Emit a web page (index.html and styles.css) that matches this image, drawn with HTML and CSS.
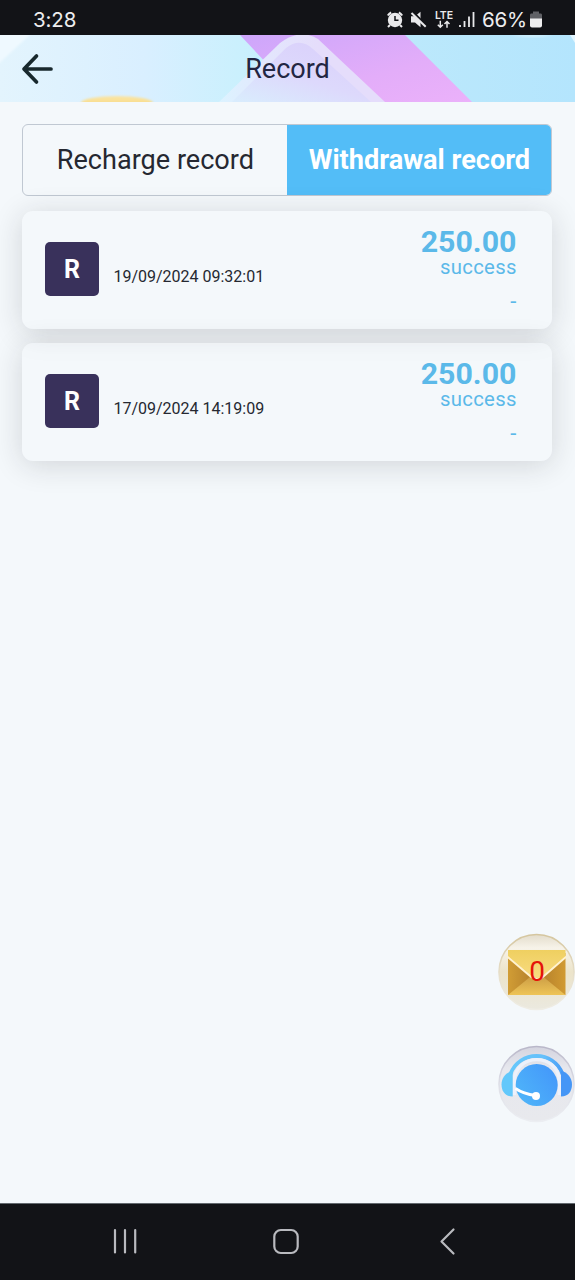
FILE: index.html
```html
<!DOCTYPE html>
<html lang="en">
<head>
<meta charset="utf-8">
<title>Record</title>
<link rel="stylesheet" href="styles.css">
</head>
<body>
<div class="phone">
  <div class="status">
    <span class="clock">3:28</span>
    <svg class="status-icons" width="94" height="35" viewBox="0 0 94 35" fill="none" stroke="#e9e9eb">
      <circle cx="14" cy="20" r="7.200" fill="#e9e9eb" stroke="none"/>
      <path d="M9 25l-2 2M19 25l2 2M6.800 15.500a9 9 0 0 1 3.400-3M21.200 15.500a9 9 0 0 0-3.400-3" stroke-width="2"/>
      <path d="M14 16v4.300h3.500" stroke="#121317" stroke-width="1.500"/>
      <path d="M30 16.300h4l5.500-4.600v15.600l-5.500-4.800h-4z" fill="#e9e9eb" stroke="none"/>
      <path d="M31.500 11.500l14 14.500" stroke="#121317" stroke-width="2.500"/>
      <path d="M30.500 13l14.200 13.700" stroke-width="2"/>
      <text class="lte" x="54" y="18.500" textLength="18">LTE</text>
      <path d="M59.300 20.800v6.200M56.800 24.700l2.500 2.500 2.500-2.500M66 27.700v-6.200M63.500 24l2.500-2.500 2.500 2.500" stroke-width="1.500"/>
      <path d="M79 25v2M83.500 21v6M88 16.500v10.500M92.500 12v15" stroke-width="1.800"/>
    </svg>
    <span class="percent">66%</span>
    <svg class="battery" width="12" height="17" viewBox="0 0 12 17">
      <path d="M3 .5h6v2H11q1 0 1 1.500v4H0V4q0-1.500 1-1.500h2z" fill="#606166"/>
      <path d="M0 7.500h12v7q0 2-2 2H2q-2 0-2-2z" fill="#eeeeef"/>
    </svg>
  </div>

  <header class="header">
    <svg class="header-art" width="575" height="67" viewBox="0 0 575 67">
      <defs>
        <linearGradient id="sky"><stop offset="0" stop-color="#e3f4fd"/><stop offset=".25" stop-color="#d9efff"/><stop offset=".42" stop-color="#caf0fd"/><stop offset=".65" stop-color="#bde9fb"/><stop offset="1" stop-color="#b4e5fd"/></linearGradient>
        <linearGradient id="pink" x2="1" y2="1"><stop stop-color="#cda6fb"/><stop offset=".6" stop-color="#e3adf9"/><stop offset="1" stop-color="#ebb1fa"/></linearGradient>
        <linearGradient id="tile" x1="0" y1="1" x2=".7" y2="0"><stop stop-color="#d9edfd"/><stop offset=".5" stop-color="#ddd9fc"/><stop offset="1" stop-color="#dad1fb"/></linearGradient>
        <linearGradient id="stripe"><stop stop-color="#dcf3ff"/><stop offset=".3" stop-color="#e3e6fd"/><stop offset=".6" stop-color="#e5ddfb"/></linearGradient>
        <linearGradient id="sun" x2="0" y2="1"><stop stop-color="#fae5a5"/><stop offset="1" stop-color="#f8d77b"/></linearGradient>
        <filter id="soft" x="-10%" y="-50%" width="120%" height="200%"><feGaussianBlur stdDeviation="1"/></filter>
      </defs>
      <path d="M0 0h575v67H0z" fill="url(#sky)"/>
      <path d="M-5-5H35Q21 8-5 32z" fill="#eff9ff" filter="url(#soft)"/>
      <path d="M240 0h165l67 67H303z" fill="url(#pink)"/>
      <path d="M219 67L280 8q20-15 38-4l67 63z" fill="url(#stripe)"/>
      <path d="M232 67L286 13q14-11 27 1l58 53z" fill="url(#tile)"/>
      <path d="M511 0h42q-20 4-42 0z" fill="#d8f2fc" filter="url(#soft)"/>
      <path d="M570 0h5v8z" fill="#e2f6ff"/>
      <ellipse cx="117" cy="68" rx="36" ry="7" fill="url(#sun)" filter="url(#soft)"/>
    </svg>
    <svg class="back" width="32" height="32" viewBox="0 0 32 32" fill="none" stroke="#18282d" stroke-width="3.700" stroke-linecap="round" stroke-linejoin="round"><path d="M15.500 3L3 16l12.500 13M3.500 16H30"/></svg>
    <h1 class="title">Record</h1>
  </header>

  <main class="content">
    <div class="tabs">
      <div class="tab">Recharge record</div>
      <div class="tab active">Withdrawal record</div>
    </div>
    <div class="records">
      <article class="card">
        <div class="avatar">R</div>
        <time class="date">19/09/2024 09:32:01</time>
        <div class="result"><strong class="amount">250.00</strong><span class="state">success</span><span class="note">-</span></div>
      </article>
      <article class="card">
        <div class="avatar">R</div>
        <time class="date">17/09/2024 14:19:09</time>
        <div class="result"><strong class="amount">250.00</strong><span class="state">success</span><span class="note">-</span></div>
      </article>
    </div>
  </main>

  <div class="floating">
    <div class="mail">
      <svg width="78" height="78" viewBox="0 0 78 78">
        <defs>
          <linearGradient id="coin" x2="0" y2="1"><stop stop-color="#e3dccb"/><stop offset=".18" stop-color="#f7f3e9"/><stop offset=".5" stop-color="#ece4ca"/><stop offset="1" stop-color="#ebe9df"/></linearGradient>
          <linearGradient id="flap" x2="0" y2="1"><stop stop-color="#efcf60"/><stop offset="1" stop-color="#f8dc80"/></linearGradient>
          <linearGradient id="fold"><stop stop-color="#d19d35"/><stop offset=".5" stop-color="#b07c2b"/><stop offset="1" stop-color="#d19a31"/></linearGradient>
          <linearGradient id="base" x2="0" y2="1"><stop stop-color="#cd9f46"/><stop offset="1" stop-color="#eec456"/></linearGradient>
          <linearGradient id="rim" x2="0" y2="1"><stop stop-color="#d5c69f"/><stop offset=".6" stop-color="#e9e2cf"/><stop offset="1" stop-color="#efede5"/></linearGradient>
        </defs>
        <circle cx="38.500" cy="39" r="37.500" fill="url(#coin)" stroke="url(#rim)" stroke-width="1.600"/>
        <path d="M10 20h57.500v42H10z" fill="url(#fold)"/>
        <path d="M10 62l22-18h13.500l22 18z" fill="url(#base)"/>
        <path d="M9.500 23.500L33 43.500q6 4.500 12 0l23-20" fill="none" stroke="#fff2cf" stroke-width="2.400"/>
        <path d="M10 17h57.500v6L45 42.500q-6 4.500-12 0L10 23z" fill="url(#flap)"/>
      </svg>
      <span class="count">0</span>
    </div>
    <svg width="78" height="78" viewBox="0 0 78 78">
      <defs>
        <linearGradient id="plate" x2="0" y2="1"><stop stop-color="#d4d4df"/><stop offset=".3" stop-color="#e7e8ee"/><stop offset="1" stop-color="#e8e9ed"/></linearGradient>
        <linearGradient id="edge" x2="0" y2="1"><stop stop-color="#b9b7c9"/><stop offset=".5" stop-color="#dedfe7"/><stop offset="1" stop-color="#eceef2"/></linearGradient>
        <linearGradient id="face" x1="0" y1="1" x2="1" y2=".3"><stop stop-color="#50b8f9"/><stop offset="1" stop-color="#4499fa"/></linearGradient>
        <linearGradient id="band" gradientUnits="userSpaceOnUse" x1="5" y1="40" x2="73" y2="40"><stop stop-color="#65c9fb"/><stop offset=".6" stop-color="#65c0fb"/><stop offset="1" stop-color="#3d8df5"/></linearGradient>
      </defs>
      <circle cx="38.500" cy="39" r="37.500" fill="url(#plate)" stroke="url(#edge)" stroke-width="1.600"/>
      <path d="M12.500 29C21 5 56 5 64.500 29" fill="none" stroke="url(#band)" stroke-width="3.800"/>
      <path d="M16.300 50V36C17 7.500 60.500 7.500 61.300 36V50" fill="none" stroke="#edf1fb" stroke-width="3.400"/>
      <path d="M14.700 26V51.500C7 51.500 3.500 46 3.500 39.500S8 27 14.700 26z" fill="#62c8fb"/>
      <path d="M63 26V51.500c7.500 0 11-5.500 11-12S69.500 27 63 26z" fill="#4596f6"/>
      <circle cx="38.700" cy="40" r="21" fill="url(#face)"/>
      <path d="M17.500 43.500q8 5.500 20 7" fill="none" stroke="#fff" stroke-width="2.800"/><circle cx="38" cy="51" r="4" fill="#fff"/>
    </svg>
  </div>

  <nav class="nav">
    <svg width="575" height="76" viewBox="0 0 575 76" fill="none" stroke="#b9babf" stroke-width="2.200" stroke-linecap="round" stroke-linejoin="round">
      <path d="M115 26v22.500M125 26v22.500M135.200 26v22.500"/>
      <rect x="274.300" y="26" width="23.400" height="23" rx="6.500"/>
      <path d="M453.500 25.500L441.500 37.500l12 12"/>
    </svg>
  </nav>
</div>
</body>
</html>
```
FILE: styles.css
```css
* { box-sizing: border-box; }
body { margin: 0; font-family: Roboto, "Noto Sans", sans-serif; color: #252831; }
.phone { position: relative; display: flex; flex-direction: column; width: 575px; height: 1280px; overflow: hidden; background: #f4f8fb; }
svg { display: block; }
.status { display: flex; height: 35px; flex: none; background: #121317; color: #ededee; font-family: Inter, sans-serif; font-size: 20.500px; line-height: 40px; }
.clock { width: 347px; padding-left: 33px; letter-spacing: -.1px; }
.status-icons { margin-left: 34px; }
.lte { font: 600 10.500px Inter, sans-serif; fill: #e9e9eb; stroke: none; }
.percent { width: 48px; margin-left: 7px; letter-spacing: -.2px; }
.battery { margin-top: 11px; }
.header { display: grid; height: 67px; flex: none; }
.header > * { grid-area: 1 / 1; }
.back { align-self: center; margin-left: 21px; }
.title { align-self: center; margin: 0; text-align: center; font-size: 27px; line-height: 66px; font-weight: 400; color: #222642; }
.content { flex: 1; padding: 22.400px 22.600px 0 22.400px; }
.tabs { display: flex; height: 71.200px; border: 1px solid #c0c8d2; border-radius: 6px; overflow: hidden; }
.tab { flex: 1; text-align: center; font-size: 27.100px; line-height: 71px; white-space: nowrap; }
.active { background: #53bdf7; color: #fff; font-weight: 700; }
.records { display: flex; flex-direction: column; gap: 14px; margin-top: 15.400px; }
.card { display: flex; height: 118px; padding: 0 36px 0 22.500px; align-items: center; border-radius: 11px; box-shadow: 0 4px 30px rgba(28, 31, 40, .16); background: rgba(244, 249, 253, .3); }
.avatar { width: 54px; height: 54px; margin-bottom: 1px; border-radius: 5px; background: #39315b; color: #fff; text-align: center; font-size: 25px; font-weight: 700; line-height: 55px; }
.date { margin: 14px 0 0 14.500px; font-size: 16px; line-height: 20px; }
.result { display: flex; flex: 1; height: 118px; flex-direction: column; align-items: flex-end; padding-top: 14px; color: #5bb9e9; }
.amount { font-size: 30.300px; line-height: 34px; }
.state { font-size: 20.300px; line-height: 16px; letter-spacing: .3px; margin-right: -.3px; }
.note { font-size: 22px; line-height: 24px; margin-top: 15px; }
.floating { position: absolute; left: 498px; top: 933px; display: grid; gap: 34px; }
.mail { display: grid; }
.mail > * { grid-area: 1 / 1; }
.count { align-self: center; text-align: center; color: #e51409; font-size: 28px; line-height: 30px; }
.nav { height: 77px; flex: none; border-top: 1px solid #62686e; background: #121317; }
```
